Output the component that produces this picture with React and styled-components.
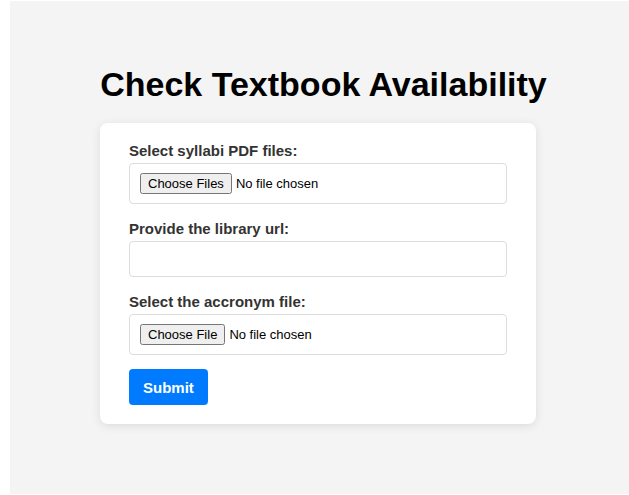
import React from "react";
import styled, { createGlobalStyle } from "styled-components";

const GlobalStyle = createGlobalStyle`
  html, body {
    margin: 0;
    padding: 0;
    background: #ffffff;
  }
  body {
    font-family: "Liberation Sans", Arial, sans-serif;
  }
`;

const Page = styled.div`
  margin: 1px 0 0 10px;
  height: 493px;
  padding: 64px 3px 0 0;
  background: #f4f4f4;
  display: flex;
  flex-direction: column;
  align-items: center;
  box-sizing: border-box;
`;

const Title = styled.h1`
  margin: 0 0 20px;
  padding-left: 11px;
  font-size: 34px;
  line-height: 38px;
  font-weight: bold;
  color: #000;
`;

const Card = styled.form`
  width: 436px;
  box-sizing: border-box;
  padding: 19px 29px 19px;
  background: #fff;
  border-radius: 8px;
  box-shadow: 0 2px 10px rgba(0, 0, 0, 0.1);
  display: flex;
  flex-direction: column;
`;

const Field = styled.div`
  display: flex;
  flex-direction: column;
  margin-bottom: 16px;

  &:last-of-type {
    margin-bottom: 14px;
  }
`;

const Label = styled.label`
  font-weight: bold;
  font-size: 15px;
  line-height: 17px;
  color: #333;
  margin-bottom: 4px;
`;

const Input = styled.input`
  box-sizing: border-box;
  width: 100%;
  padding: 10px;
  border: 1px solid #ddd;
  border-radius: 4px;
  font-family: "Liberation Sans", Arial, sans-serif;
  font-size: 13px;
  background: #fff;

  &[type="text"] {
    height: 36px;
  }

  &[type="file"] {
    height: 41px;
    padding: 9px 10px;
  }
`;

const SubmitButton = styled.button`
  align-self: flex-start;
  height: 36px;
  padding: 0 14px;
  border: none;
  border-radius: 4px;
  background: #007bff;
  color: #fff;
  font-family: "Liberation Sans", Arial, sans-serif;
  font-size: 15px;
  font-weight: bold;
  cursor: pointer;
`;

export default function App() {
  return (
    <>
      <GlobalStyle />
      <Page>
        <Title>Check Textbook Availability</Title>
        <Card onSubmit={(e) => e.preventDefault()}>
          <Field>
            <Label htmlFor="syllabi">Select syllabi PDF files:</Label>
            <Input id="syllabi" type="file" multiple accept="application/pdf" />
          </Field>
          <Field>
            <Label htmlFor="library">Provide the library url:</Label>
            <Input id="library" type="text" />
          </Field>
          <Field>
            <Label htmlFor="acronyms">Select the accronym file:</Label>
            <Input id="acronyms" type="file" />
          </Field>
          <SubmitButton type="submit">Submit</SubmitButton>
        </Card>
      </Page>
    </>
  );
}
